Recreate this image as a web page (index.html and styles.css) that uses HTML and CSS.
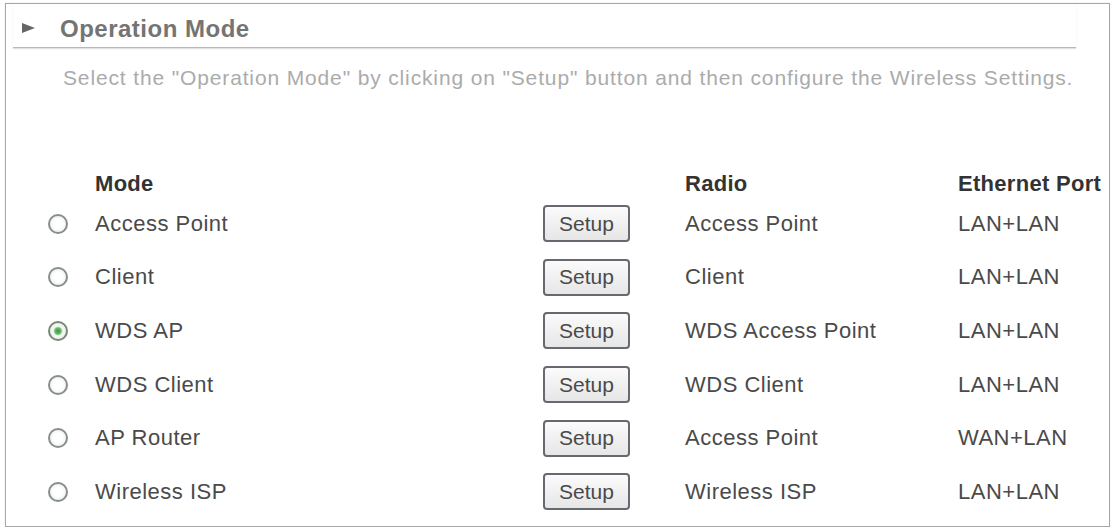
FILE: index.html
```html
<!DOCTYPE html>
<html lang="en">
<head>
    <meta charset="UTF-8">
    <title>Operation Mode</title>
    <link rel="stylesheet" href="styles.css">
</head>
<body>
    <div class="panel">
        <div class="section-title">
            <span class="arrow"></span>
            <h2>Operation Mode</h2>
        </div>

        <p class="hint">Select the "Operation Mode" by clicking on "Setup" button and then configure the Wireless Settings.</p>

        <div class="mode-table">
            <div class="mode-row head">
                <span></span>
                <span>Mode</span>
                <span></span>
                <span>Radio</span>
                <span>Ethernet Port</span>
            </div>
            <div class="mode-row">
                <span class="cell-radio"><input type="radio" name="opmode" value="ap"></span>
                <span>Access Point</span>
                <span><button>Setup</button></span>
                <span>Access Point</span>
                <span>LAN+LAN</span>
            </div>
            <div class="mode-row">
                <span class="cell-radio"><input type="radio" name="opmode" value="client"></span>
                <span>Client</span>
                <span><button>Setup</button></span>
                <span>Client</span>
                <span>LAN+LAN</span>
            </div>
            <div class="mode-row">
                <span class="cell-radio"><input type="radio" name="opmode" value="wdsap" checked></span>
                <span>WDS AP</span>
                <span><button>Setup</button></span>
                <span>WDS Access Point</span>
                <span>LAN+LAN</span>
            </div>
            <div class="mode-row">
                <span class="cell-radio"><input type="radio" name="opmode" value="wdsclient"></span>
                <span>WDS Client</span>
                <span><button>Setup</button></span>
                <span>WDS Client</span>
                <span>LAN+LAN</span>
            </div>
            <div class="mode-row">
                <span class="cell-radio"><input type="radio" name="opmode" value="router"></span>
                <span>AP Router</span>
                <span><button>Setup</button></span>
                <span>Access Point</span>
                <span>WAN+LAN</span>
            </div>
            <div class="mode-row">
                <span class="cell-radio"><input type="radio" name="opmode" value="wisp"></span>
                <span>Wireless ISP</span>
                <span><button>Setup</button></span>
                <span>Wireless ISP</span>
                <span>LAN+LAN</span>
            </div>
        </div>
    </div>
</body>
</html>
```

FILE: styles.css
```css
body {
    margin: 0;
    padding: 3px 5px 0 5px;
    background-color: #fff;
    font-family: "Liberation Sans", Arial, sans-serif;
    color: #4a4a4a;
}
.panel {
    width: 1103px;
    height: 522px;
    border: 1px solid #a8a8a8;
    box-shadow: 0 0 1px #ccc;
}
.section-title {
    display: flex;
    align-items: center;
    height: 36px;
    margin: 0 33px 0 7px;
    padding: 7px 0 0 9px;
    border-bottom: 1px solid #b9b9b9;
    box-shadow: 0 1px 1px #e2e2e2;
}
.arrow {
    width: 0;
    height: 0;
    border-top: 5px solid transparent;
    border-bottom: 5px solid transparent;
    border-left: 13px solid #666;
    margin: -2px 25px 0 0;
}
.section-title h2 {
    margin: 0;
    font-size: 24px;
    font-weight: bold;
    letter-spacing: 0.5px;
    color: #747474;
}
.hint {
    margin: 16px 0 0 57px;
    font-size: 21px;
    letter-spacing: 0.86px;
    line-height: 28px;
    color: #ababab;
}
.mode-table {
    margin-top: 79px;
}
.mode-row {
    display: grid;
    grid-template-columns: 89px 448px 142px 273px 1fr;
    align-items: center;
    height: 53.6px;
    font-size: 22px;
    letter-spacing: 0.5px;
}
.mode-row.head {
    height: 26px;
    font-weight: bold;
    letter-spacing: 0.3px;
    color: #333;
}
.cell-radio {
    display: flex;
    padding-left: 42px;
}
/* flat round radios with a soft inner fill */
input[type="radio"] {
    -webkit-appearance: none;
    appearance: none;
    width: 20px;
    height: 20px;
    margin: 0;
    border: 2px solid #888d8d;
    border-radius: 50%;
    background: radial-gradient(circle, #fff 40%, #e3e8e8 100%);
}
input[type="radio"]:checked {
    border-color: #778a77;
    background: radial-gradient(circle, #3c963c 0, #6abd6a 28%, #f4f8f4 42%, #e4eae4 100%);
}
button {
    width: 87px;
    height: 37px;
    padding: 0;
    font-family: inherit;
    font-size: 21px;
    color: #4a4a4a;
    border: 2px solid #666a70;
    border-radius: 4px;
    background: linear-gradient(#fbfbfb, #e6e6e6);
}
```
